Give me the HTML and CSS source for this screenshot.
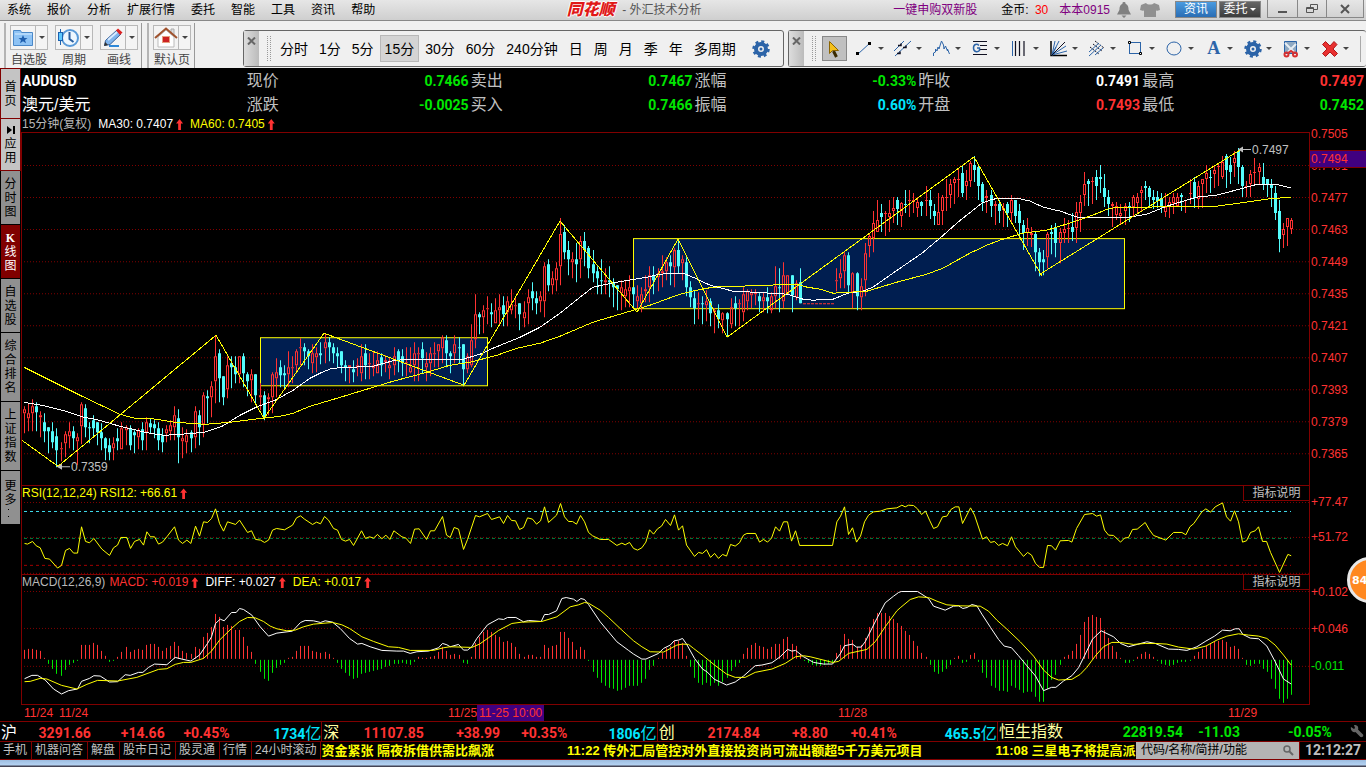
FILE: index.html
```html
<!DOCTYPE html>
<html lang="zh-CN">
<head>
<meta charset="utf-8">
<title>同花顺 - 外汇技术分析</title>
<link rel="stylesheet" href="styles.css">
</head>
<body>
<header class="menubar">
  <nav class="menu">
    <button>系统</button><button>报价</button><button>分析</button><button>扩展行情</button><button>委托</button><button>智能</button><button>工具</button><button>资讯</button><button>帮助</button>
  </nav>
  <h1 class="title"><span class="logo">同花顺</span> - 外汇技术分析</h1>
  <div class="account">
    <a class="promo" href="#">一键申购双新股</a>
    <span class="coins">金币: <b>30</b></span>
    <a href="#">本本0915</a>
    <svg class="bell" width="16" height="16" viewBox="0 0 16 16" fill="#808080"><path d="M8 0a1.500 1.500 0 0 1 1.500 1.800C12 2.600 12.500 5 12.600 8l2.400 4.500H1L3.400 8C3.500 5 4 2.600 6.500 1.800A1.500 1.500 0 0 1 8 0zM5.500 13.500h5L8 16z"/></svg>
    <svg class="shirt" width="20" height="16" viewBox="0 0 20 16" fill="#909090"><path d="M6 1c1.500 2 6.500 2 8 0l5 2 1 5-3.500 1L16 7.500V15H4V7.500L3.500 9 0 8l1-5z"/></svg>
    <button class="info">资讯</button><button class="trade">委托<i class="caret"></i></button>
    <div class="winctl">
      <button aria-label="最小化"><svg width="10" height="10" viewBox="0 0 10 10"><path d="M1 8h9" stroke="#555" stroke-width="2"/></svg></button>
      <button aria-label="还原"><svg width="12" height="10" viewBox="0 0 12 10" fill="none" stroke="#555"><path d="M4.500 3V.5h7v5H8M.5 3.500h7v5h-7zM.5 4.500h7"/></svg></button>
      <button aria-label="关闭"><svg width="10" height="10" viewBox="0 0 10 10"><path d="M1 1l8 8M9 1L1 9" stroke="#555" stroke-width="2"/></svg></button>
    </div>
  </div>
</header>

<div class="toolbar">
  <div class="shortcuts">
    <div class="group">
      <div class="tool"><button aria-label="自选股"><svg width="22" height="20" viewBox="0 0 22 20"><path d="M1.500 4V2.500h7l1 2h11v13h-19z" fill="#8ec3f5" stroke="#4a88c8"/><path d="M3 5.500h17v1H3z" fill="#d8ecff"/><path d="M11 7l1.300 3h3.200l-2.500 2 1 3.200-3-2-3 2 1-3.200-2.500-2h3.200z" fill="#1f5fae"/></svg></button><button aria-label="自选股菜单"><i class="caret"></i></button><span>自选股</span></div>
      <div class="tool"><button aria-label="周期"><svg width="22" height="20" viewBox="0 0 22 20"><circle cx="13" cy="10" r="8" fill="#eef7ff" stroke="#5a9ad8" stroke-width="2"/><path d="M12.500 4v7l4 3" fill="none" stroke="#2a5f9f" stroke-width="2"/><path d="M3.500 1v3m0 9v4" stroke="#1c62b0"/><rect x="1.500" y="4.500" width="4" height="8" fill="#5cc8ff" stroke="#1c62b0"/></svg></button><button aria-label="周期菜单"><i class="caret"></i></button><span>周期</span></div>
      <div class="tool"><button aria-label="画线"><svg width="22" height="20" viewBox="0 0 22 20"><path d="M7 18h10" stroke="#2f88d8" stroke-width="2"/><path d="M2.500 17.500l1-5L15 2l4 4L8 16.500z" fill="#7fb4ec" stroke="#365f98"/><path d="M14 2.500L16 .5l4.500 4L18 7z" fill="#d22"/><path d="M6 12l9-8" stroke="#d8eaff" stroke-width="2"/><path d="M2 18l1.200-4L6 17z" fill="#333"/></svg></button><button aria-label="画线菜单"><i class="caret"></i></button><span>画线</span></div>
    </div>
    <div class="group">
      <div class="tool"><button aria-label="默认页"><svg width="24" height="21" viewBox="0 0 24 21"><path d="M17 2h3v6h-3z" fill="#ddd" stroke="#aaa"/><path d="M4 10l8-7 8 7v10H4z" fill="#fff" stroke="#bbb"/><path d="M1 11L12 1.500 23 11" fill="none" stroke="#a0522d" stroke-width="2"/><rect x="8.500" y="9.500" width="7" height="6" fill="#c22" stroke="#e8a080"/></svg></button><button aria-label="默认页菜单"><i class="caret"></i></button><span>默认页</span></div>
    </div>
  </div>

  <div class="floatbar periods">
    <button class="close" aria-label="关闭工具条"><svg width="9" height="8" viewBox="0 0 9 8"><path d="M1 .5l7 7M8 .5l-7 7" stroke="#666" stroke-width="2"/></svg></button>
    <i class="grip"></i>
    <div class="periodlist">
      <button>分时</button><button>1分</button><button>5分</button><button class="on">15分</button><button>30分</button><button>60分</button><button>240分钟</button><button>日</button><button>周</button><button>月</button><button>季</button><button>年</button><button class="multi">多周期</button>
    </div>
    <button class="gear" aria-label="设置"><svg width="18" height="18" viewBox="0 0 18 18"><circle cx="9" cy="9" r="5" fill="none" stroke="#2c64a8" stroke-width="4"/><circle cx="9" cy="9" r="7.500" fill="none" stroke="#2c64a8" stroke-width="2.500" stroke-dasharray="3 2.890"/><circle cx="9" cy="9" r="1.500" fill="#2c64a8"/></svg></button>
  </div>

  <div class="floatbar drawing">
    <button class="close" aria-label="关闭画线工具"><svg width="9" height="8" viewBox="0 0 9 8"><path d="M1 .5l7 7M8 .5l-7 7" stroke="#666" stroke-width="2"/></svg></button>
    <i class="grip"></i>
    <button class="pointer" aria-label="选择"><svg width="12" height="18" viewBox="0 0 12 18"><path d="M5.500 11l3 6" stroke="#3a2a00" stroke-width="3"/><path d="M1.500 1.500v12l3-3h6z" fill="#f4c01c" stroke="#8b6400"/></svg></button>
    <div class="drawlist">
      <button aria-label="直线"><svg viewBox="0 0 18 18"><path d="M2 14L14 3" stroke="#2c64a8"/><path d="M0 12h3v3H0zM12 2h3v3h-3z" fill="#000"/></svg><i class="caret"></i></button>
      <button aria-label="平行线"><svg viewBox="0 0 18 18"><path d="M0 11L10 1M1 16L17 1" stroke="#2c64a8"/><path d="M4 5.500h3v-2M3 13.500h3v-2M9 7.500h3v-2" fill="none" stroke="#112" stroke-width="1.500"/></svg><i class="caret"></i></button>
      <button aria-label="波浪"><svg viewBox="0 0 18 18"><path d="M.5 16v-3l2-1V9l1.500 2 1-4 1 2 1.500-5 1-3 2 4 .5 4 1.500-3 2 5v-2l2 5" fill="none" stroke="#2c64a8"/></svg><i class="caret"></i></button>
      <button aria-label="黄金分割"><svg viewBox="0 0 18 18"><path d="M1 1.500h14M8 5.500h7M8 9.500h7M1 14.500h14" stroke="#112"/><path d="M7 5.500C5 3.500 1.500 4 1.500 8s4 4.500 6 2.500V8H5" fill="none" stroke="#2c64a8" stroke-width="1.500"/></svg><i class="caret"></i></button>
      <button aria-label="周期线"><svg viewBox="0 0 18 18"><path d="M4.500 1v15M8.500 1v15M13 1v15" stroke="#112" stroke-width="1.200"/><path d="M1.500 1v15" stroke="#2c64a8"/></svg><i class="caret"></i></button>
      <button aria-label="角度线"><svg viewBox="0 0 18 18"><path d="M1 1v14.500H17" fill="none" stroke="#000" stroke-width="1.500"/><path d="M2 15L5 1M2 15L9 1M2 15L16 6M2 15L17 11M2 15L6 7" stroke="#2c64a8"/><path d="M2 15L15 2" stroke="#112"/></svg><i class="caret"></i></button>
      <button aria-label="通道"><svg viewBox="0 0 18 18"><path d="M7 1l9 7M5 4l9 7M2 7l9 7" stroke="#112" stroke-dasharray="2 1"/><path d="M1 12L11 3M1 16L13 5M7 15l8-7" stroke="#2c64a8"/></svg><i class="caret"></i></button>
      <button aria-label="矩形"><svg viewBox="0 0 18 18"><rect x="2.500" y="2.500" width="11" height="11" fill="none" stroke="#2c64a8"/><path d="M1.500 1.500h2v2h-2zM12.500 12.500h2v2h-2z" fill="#fff" stroke="#000"/></svg><i class="caret"></i></button>
      <button aria-label="圆"><svg viewBox="0 0 18 18"><ellipse cx="8" cy="8.500" rx="7" ry="6.500" fill="none" stroke="#2c64a8"/></svg><i class="caret"></i></button>
      <button aria-label="文字"><b class="letter">A</b><i class="caret"></i></button>
      <button aria-label="画线设置"><svg viewBox="0 0 18 18"><circle cx="9" cy="9" r="5" fill="none" stroke="#2c64a8" stroke-width="4"/><circle cx="9" cy="9" r="7.500" fill="none" stroke="#2c64a8" stroke-width="2.500" stroke-dasharray="3 2.890"/><circle cx="9" cy="9" r="1.500" fill="#2c64a8"/></svg><i class="caret"></i></button>
      <button aria-label="截图"><svg viewBox="0 0 18 18"><path d="M2.500 1.500h12v12h-12z" fill="#8fa9c2" stroke="#2c64a8"/><path d="M3 3l9 9M14 4L6 12" stroke="#e8eef4" stroke-width="2"/><circle cx="4.500" cy="14.500" r="2" fill="none" stroke="#d83030" stroke-width="2"/><circle cx="13" cy="14.500" r="2" fill="none" stroke="#d83030" stroke-width="2"/><path d="M6 13l3-2 3 2" fill="none" stroke="#d83030" stroke-width="2"/></svg><i class="caret"></i></button>
      <button aria-label="删除"><svg viewBox="0 0 18 18"><path d="M1.500 4.500l3-3L9 6l4-4.500 3 3L12 9l4.500 4.500-3 3L9 12l-4.500 4.500-3-3L6 9z" fill="#e83030" stroke="#b01818"/></svg><i class="caret"></i></button>
    </div>
  </div>
</div>

<main class="workspace">
  <nav class="sidetabs">
    <button class="bright short">首页</button>
    <button class="bright app"><svg width="8" height="8" viewBox="0 0 8 8"><path d="M0 0l5 4-5 4zM6 0h2v8H6z"/></svg>应用</button>
    <button>分时图</button>
    <button class="active"><b>K</b>线图</button>
    <button>自选股</button>
    <button class="tall">综合排名</button>
    <button class="tall">上证指数</button>
    <button>更多<i class="dots"></i></button>
  </nav>

  <div class="content">
    <section class="quotes">
      <div class="name">AUDUSD</div>
      <div><span>现价</span><b class="down">0.7466</b></div>
      <div><span>卖出</span><b class="down">0.7467</b></div>
      <div><span>涨幅</span><b class="down">-0.33%</b></div>
      <div><span>昨收</span><b>0.7491</b></div>
      <div><span>最高</span><b class="up">0.7497</b></div>
      <div class="alias">澳元/美元</div>
      <div><span>涨跌</span><b class="down">-0.0025</b></div>
      <div><span>买入</span><b class="down">0.7466</b></div>
      <div><span>振幅</span><b class="cyan">0.60%</b></div>
      <div><span>开盘</span><b class="up">0.7493</b></div>
      <div><span>最低</span><b class="down">0.7452</b></div>
    </section>

    <section class="pane price">
      <div class="plot">
        <div class="legend"><span class="dim">15分钟(复权)</span><span class="white">MA30: 0.7407<i class="rise"></i></span><span class="yellow">MA60: 0.7405<i class="rise"></i></span></div>
        <div class="frame"><svg id="price" viewBox="22 133 1287 352" preserveAspectRatio="none"></svg></div>
      </div>
      <div class="axis"><span>0.7505</span><span>0.7491</span><span>0.7477</span><span>0.7463</span><span>0.7449</span><span>0.7435</span><span>0.7421</span><span>0.7407</span><span>0.7393</span><span>0.7379</span><span>0.7365</span><b class="cursor">0.7494</b></div>
    </section>

    <section class="pane rsi">
      <div class="plot frame">
        <div class="legend"><span class="yellow">RSI(12,12,24) RSI12: +66.61<i class="rise"></i></span><button class="explain">指标说明</button></div>
        <svg id="rsi" viewBox="22 501 1287 73" preserveAspectRatio="none"></svg>
      </div>
      <div class="axis"><span>+77.47</span><span>+51.72</span></div>
    </section>

    <section class="pane macd">
      <div class="plot frame">
        <div class="legend"><span class="dim">MACD(12,26,9)</span><span class="up">MACD: +0.019<i class="rise"></i></span><span class="white">DIFF: +0.027<i class="rise"></i></span><span class="yellow">DEA: +0.017<i class="rise"></i></span><button class="explain">指标说明</button></div>
        <svg id="macd" viewBox="22 590 1287 114" preserveAspectRatio="none"></svg>
      </div>
      <div class="axis"><span>+0.102</span><span>+0.046</span><span class="down">-0.011</span></div>
    </section>

    <div class="dates"><span>11/24</span><span>11/24</span><span>11/25</span><span><b>11-25 10:00</b></span><span>11/28</span><span>11/29</span></div>
  </div>
</main>

<section class="indices">
  <div class="sh"><span class="white">沪</span><b>3291.66</b><b>+14.66</b><b>+0.45%</b><b class="cyan">1734<i>亿</i></b></div>
  <div class="sz"><span>深</span><b>11107.85</b><b>+38.99</b><b>+0.35%</b><b class="cyan">1806<i>亿</i></b></div>
  <div class="cy"><span>创</span><b>2174.84</b><b>+8.80</b><b>+0.41%</b><b class="cyan">465.5<i>亿</i></b></div>
  <div class="hs"><span>恒生指数</span><b class="down">22819.54</b><b class="down">-11.03</b><b class="down">-0.05%</b>
    <svg width="14" height="14" viewBox="0 0 14 14"><path d="M1 2l3 2 1-1-1-3c3-.5 5 2 4 4.500l5 5c1 2-1 3-2.500 2.500l-5-5C3 8 0 5 1 2z" fill="#666"/></svg></div>
</section>

<footer class="ticker">
  <nav><a href="#">手机</a><a href="#">机器问答</a><a href="#">解盘</a><a href="#">股市日记</a><a href="#">股灵通</a><a href="#">行情</a><a href="#">24小时滚动</a></nav>
  <div class="news"><a href="#">资金紧张 隔夜拆借供需比飙涨</a><a href="#">11:22 传外汇局管控对外直接投资尚可流出额超5千万美元项目</a><a href="#">11:08 三星电子将提高派</a></div>
  <label class="search"><input type="text" placeholder="代码/名称/简拼/功能" aria-label="搜索"><svg width="11" height="11" viewBox="0 0 11 11" fill="none" stroke="#666"><circle cx="4" cy="4" r="3" stroke-width="1.500"/><path d="M6 6l4 4" stroke-width="2"/></svg></label>
  <time>12:12:27</time>
</footer>
<div class="desktop"></div>
<button class="bubble">84</button>
<script src="chart.js"></script>
</body>
</html>
```
FILE: styles.css
```css
* { box-sizing: border-box; }
body {
  margin: 0; min-height: 100vh; display: flex; flex-direction: column; position: relative; overflow: hidden;
  background: #000; color: #fff;
  font: 12px/16px "Liberation Sans", "Noto Sans CJK SC", sans-serif;
}
button { font: inherit; color: inherit; background: none; border: 0; padding: 0; margin: 0; white-space: nowrap; }
a { color: inherit; text-decoration: none; }
svg { display: block; flex: none; }
.caret { display: block; border: 4px solid transparent; border-top-color: #444; border-bottom: 0; flex: none; }
.white { color: #fff; }
.yellow { color: #ff0; }
.dim { color: #b8b8b8; }
.up { color: #ff3232; }
.down { color: #00e600; }
.cyan { color: #00e6ff; }

/* menu bar */
.menubar { display: flex; align-items: center; justify-content: space-between; height: 21px; background: linear-gradient(#e6e6e6, #cfcfcf); border-bottom: 1px solid #888; color: #000; padding-left: 7px; }
.menu { display: flex; gap: 16px; }
.title { margin: 0; font-size: 12px; font-weight: normal; color: #555; display: flex; gap: 4px; white-space: pre; }
.logo { font-size: 16px; font-weight: 900; font-style: italic; color: #e01818; text-shadow: 1px 0 #fff, -1px 0 #fff, 0 1px #fff, 0 -1px #fff; }
.account { display: flex; align-items: center; height: 20px; color: #800080; white-space: nowrap; }
.promo { margin-right: 24px; }
.coins { color: #000; margin-right: 11px; }
.coins b { font-weight: normal; color: #f00; margin-left: 3px; }
.bell { margin-left: 6px; }
.shirt { margin: 0 15px 0 8px; }
.info, .trade { height: 17px; width: 42px; color: #fff; border: 1px solid #888; display: flex; align-items: center; justify-content: center; gap: 3px; margin-bottom: 2px; }
.info { background: linear-gradient(#4a9be0, #2a6db4); margin-right: 2px; }
.trade { background: linear-gradient(#666, #3c3c3c); }
.trade .caret { border-width: 3px; border-bottom-width: 0; border-top-color: #fff; }
.winctl { display: flex; margin: 0 2px 0 6px; height: 18px; align-self: flex-start; border: 1px solid #888; border-top: 0; }
.winctl button { width: 29px; display: grid; place-items: center; }
.winctl button + button { border-left: 1px solid #888; }
.winctl button:last-child { width: 37px; }

/* toolbars */
.toolbar { display: flex; height: 47px; background: #f0f0f0; color: #000; }
.shortcuts { display: flex; padding: 2px 0 0 4px; width: 243px; flex: none; }
.group { display: flex; gap: 7px; padding: 2px 3px 0 4px; border-left: 2px solid #b4b4b4; border-right: 1px solid #999; margin-right: 5px; }
.tool { display: grid; grid-template-columns: 26px 12px; grid-template-rows: 25px 16px; color: #444; }
.tool button { border: 1px solid #b8b8b8; display: grid; place-items: center; background: #f4f4f4; }
.tool button + button { border-left: 0; }
.tool .caret { border-width: 3px; border-bottom-width: 0; }
.tool span { grid-column: 1 / 3; text-align: center; white-space: nowrap; line-height: 20px; }
.floatbar { display: flex; align-items: center; height: 37px; margin-top: 9px; border: 1px solid #666; border-radius: 3px; background: #f0f0f0; }
.close { width: 15px; align-self: stretch; display: flex; justify-content: center; padding-top: 6px; background: linear-gradient(90deg, #ddd, #bbb); }
.grip { width: 4px; height: 25px; margin-left: 8px; border-left: 1px dotted #999; border-right: 1px dotted #999; }
.periods { flex: 540 1 0; margin-right: 4px; min-width: 520px; }
.periodlist { display: flex; gap: 1px; margin-left: 4px; font-size: 14px; align-items: center; }
.periodlist button { height: 27px; padding: 0 5px; }
.periodlist .on { background: #d4d4d4; border: 1px solid #b8b8b8; padding: 0 4px; }
.gear { margin-left: 11px; }
.drawing { flex: 579 1 0; border-right: 0; }
.pointer { width: 25px; height: 25px; margin-left: 6px; background: #c0c0c0; border: 1px solid #888; display: grid; place-items: center; }
.drawlist { display: flex; flex: 1; padding-left: 9px; margin-right: 5px; border-right: 1px solid #aaa; height: 26px; }
.drawlist button { flex: 1; display: flex; align-items: center; gap: 4px; }
.drawlist svg { width: 18px; height: 18px; }
.drawlist .caret { border-width: 3px; border-bottom-width: 0; }
.letter { width: 18px; font: bold 18px "Liberation Serif", serif; color: #2c64a8; }

/* side tabs */
.workspace { display: flex; flex: 1; }
.sidetabs { width: 21px; display: flex; flex-direction: column; gap: 1px; flex: none; border-top: 1px solid #800000; }
.sidetabs button { width: 19px; height: 53px; margin-left: 1px; background: #909090; color: #000; white-space: normal; word-break: break-all; padding: 0 3px; line-height: 14px; }
.sidetabs .short { height: 49px; }
.sidetabs .tall { height: 68px; }
.sidetabs .bright { background: #c4c4c4; outline: 1px solid #800000; }
.sidetabs .app { height: 51px; }
.sidetabs .app svg { margin: 2px 0 3px 3px; }
.sidetabs .active { background: #800000; color: #fff; }
.sidetabs b { display: block; font-family: "Liberation Serif", serif; }
.dots { display: block; width: 1px; height: 8px; margin: 2px 0 0 4px; border-top: 1px solid #000; border-bottom: 1px solid #000; }

/* quote table */
.content { flex: 1; display: flex; flex-direction: column; min-width: 0; }
.quotes { display: grid; grid-template-columns: 225fr repeat(5, 224fr); padding-left: 1px; line-height: 24px; font-size: 16px; padding-top: 1px; }
.quotes div { display: flex; justify-content: space-between; padding-right: 2px; }
.quotes span { color: #c0c0c0; }
.quotes b, .quotes .name { font: bold 14px/24px Roboto, sans-serif; }

/* chart panes */
.pane { display: flex; line-height: 15px; }
.plot { flex: 1; display: flex; flex-direction: column; min-width: 0; }
.plot svg { width: 100%; flex: 1 1 0; height: 0; min-height: 0; }
.frame { border: 1px solid #800000; border-bottom: 0; }
.price .frame { flex: 1; display: flex; }
.price .frame svg { height: auto; }
.price { flex: 369 1 0; }
.rsi { flex: 89 1 0; }
.macd { flex: 130 1 0; }
.price .legend { height: 15px; padding-left: 1px; }
.legend { display: flex; height: 15px; flex: none; gap: 7px; white-space: nowrap; }
.legend span { display: flex; align-items: center; gap: 3px; line-height: 17px; }
.legend .dim + .up { margin-left: -3px; }
.rise { width: 7px; height: 11px; background: #ff3232; clip-path: polygon(50% 0, 100% 40%, 70% 40%, 70% 100%, 30% 100%, 30% 40%, 0 40%); }
.explain { margin-left: auto; width: 66px; color: #c0c0c0; border: 1px solid #800000; border-top: 0; border-right: 0; }
.axis { width: 56px; padding-left: 1px; position: relative; color: #ff3232; }
.axis span { display: block; line-height: 32px; }
.price .axis { padding-top: 1px; }
.rsi .axis span { line-height: 35px; }
.macd .axis span { line-height: 37px; }
.axis .cursor { position: absolute; left: -1px; right: 0; top: 33px; height: 18px; line-height: 16px; padding-left: 1px; font-weight: normal; background: #400080; border: 1px solid #800000; border-right: 0; }
.dates { display: grid; grid-template-columns: 35fr 389fr 29fr 361fr 390fr 82fr; padding-left: 3px; border-top: 1px solid #800000; margin-right: 56px; line-height: 16px; color: #ff3232; white-space: nowrap; }
.dates b { font-weight: normal; background: #400080; display: inline-block; padding: 0 2px; }
.grid { stroke: #800000; stroke-dasharray: 1 2; }
.line { fill: none; shape-rendering: crispEdges; }
.box { fill: #001e50; stroke: #ff0; }
.note { fill: #c0c0c0; font-size: 12px; }

/* index strip */
.indices { display: flex; border-top: 1px solid #800000; height: 20px; line-height: 20px; font-size: 16px; color: #ff3232; }
.indices div { display: grid; padding-left: 1px; white-space: nowrap; align-items: center; }
.indices div + div { border-left: 1px solid #800000; }
.indices span { color: #ffffa0; }
.indices .white { color: #fff; }
.indices b { font: bold 14px/20px Roboto, sans-serif; text-align: right; }
.indices i { font: 16px/20px "Noto Sans CJK SC", sans-serif; }
.sh { flex: 322 1 0; grid-template-columns: 16fr 74fr 74fr 65fr 92fr; }
.sz { flex: 335 1 0; grid-template-columns: 16fr 84fr 76fr 67fr 89fr; }
.cy { flex: 340 1 0; grid-template-columns: 16fr 85fr 68fr 69fr 100fr; }
.hs { flex: 369 1 0; grid-template-columns: 64fr 120fr 57fr 92fr 34fr; }
.hs svg { margin-left: 18px; }

/* news ticker */
.ticker { display: flex; height: 19px; border-top: 1px solid #800000; border-bottom: 1px solid #800000; line-height: 17px; color: #c0c0c0; }
.ticker nav { display: flex; }
.ticker nav a { padding: 0 4px 0 3px; border-right: 1px solid #800000; white-space: nowrap; }
.news { flex: 1 1 0; min-width: 0; overflow: hidden; display: flex; gap: 73px; font-size: 13px; font-weight: bold; color: #ff0; white-space: nowrap; }
.search { display: flex; align-items: center; width: 163px; background: #b4b4b4; padding: 0 5px; }
.search input { flex: 1; min-width: 0; border: 0; padding: 0; background: none; font: inherit; color: #000; }
.search input::placeholder { color: #000; opacity: 1; }
.ticker time { font: bold 14px/17px Roboto, sans-serif; padding: 0 5px; border-left: 1px solid #800000; }
.desktop { height: 7px; background: linear-gradient(#9dbde0, #b4d2f2 5px, #445 6px); }
.bubble { position: absolute; right: -27px; top: 557px; width: 46px; height: 46px; border-radius: 50%; background: #ff8820; border: 3px solid #e8e8e8; color: #fff; font: bold 11px "DejaVu Sans", sans-serif; text-align: left; padding-left: 2px; }
```
FILE: chart.js
```js
const NS = 'http://www.w3.org/2000/svg';
const RED = '#ff3232', CYAN = '#54fcfc', GREEN = '#00e600';

function add(parent, tag, attrs, text) {
  const el = document.createElementNS(NS, tag);
  for (const key in attrs) el.setAttribute(key, attrs[key]);
  if (text) el.textContent = text;
  parent.appendChild(el);
  return el;
}
const hline = (svg, y, attrs, x2 = 1309) => add(svg, 'path', { d: `M24 ${y + 0.5}H${x2}`, ...attrs });
const barX = i => 24 + Math.round(i * 4.061);
const toPoints = text => text.trim().split(/\s+/).map(p => p.split(',').map(Number));
const polyline = (svg, points, stroke) => add(svg, 'polyline', { class: 'line', points: points.map(p => p.join(',')).join(' '), stroke });

// Sub-pane series come in three blocks; x and y are in thirds of a pixel from the block origin.
const origins = [0, 450, 900];
const join = blocks => blocks.flatMap((b, k) => toPoints(b).map(([x, y]) => [origins[k] + x / 3, y]));
const series = blocks => join(blocks).map(([x, y]) => [x + 0.2, 480.2 + y / 3]);

// colour, high, body top, body bottom, low
const candles = `r406,409,413,433 r403,413,418,431 r399,406,413,431 c402,406,412,431 r411,415,417,437 c413,422,431,442 c427,427,431,453 c422,431,442,448 c428,436,450,467 r442,448,449,461
r431,434,443,457 r422,431,436,448 c426,431,438,450 r433,437,441,465 r402,404,426,444 c404,408,427,437 c422,427,428,443 c415,420,428,437 c422,422,432,445 c423,432,438,450
c437,438,448,460 c438,445,452,460 r437,443,448,460 c428,438,441,450 r422,428,449,449 r425,427,430,445 c425,428,445,450 c430,432,435,453 r428,430,437,449 c422,429,440,450
r417,422,432,450 c418,423,427,433 c420,424,428,438 c422,428,440,450 c428,435,442,452 r425,429,433,442 r420,425,431,440 r406,415,427,440 c409,418,437,463 r427,438,441,458
r429,435,442,453 c430,432,438,452 r406,411,437,448 c410,415,427,445 r392,395,424,437 c390,396,398,423 r381,386,397,417 r335,356,381,403 c349,353,378,402 c376,376,397,405
r356,365,389,398 c356,363,367,388 c356,367,374,383 r356,356,374,383 c353,356,373,387 c372,374,381,396 r369,374,380,402 c374,374,395,404 r383,395,397,410 c391,395,417,420
r393,397,399,415 r372,374,397,413 r358,372,378,397 c360,367,375,387 c365,373,375,388 r351,367,374,387 r356,367,368,383 r349,351,365,373 r338,347,348,365 c343,347,351,365
c349,351,356,369 r344,353,363,373 r347,353,357,372 c342,353,355,364 r333,342,348,363 c337,342,347,361 c343,347,353,363 c347,353,356,367 c351,351,365,373 c360,365,367,381
r365,365,367,383 c360,369,372,382 r358,365,367,376 r344,356,373,381 c344,353,365,379 r353,363,364,379 r351,365,368,376 r351,360,373,373 c353,357,365,376 r355,360,362,372
r357,365,368,379 r347,356,365,375 c349,351,361,372 c349,356,363,376 r347,362,363,376 r347,367,372,373 r342,353,365,381 r347,353,354,381 c342,349,358,373 r352,363,367,381
r347,353,363,376 r342,353,354,367 r344,344,351,367 r335,337,348,363 c335,340,353,367 c351,353,356,373 r335,344,353,363 c337,347,348,363 c344,344,369,386 r353,356,369,373
r324,340,365,367 r294,314,339,348 c312,314,317,334 r305,310,317,333 r296,308,309,324 c303,312,314,327 r298,310,323,323 r294,307,310,324 c296,305,314,326 r296,301,312,326
r289,304,310,314 r296,305,306,318 c303,303,314,330 r301,312,318,327 r289,297,303,324 c282,291,298,310 c291,298,303,314 r291,296,301,312 r262,266,301,317 c259,264,285,291
r271,278,285,294 r262,268,280,291 r218,234,266,285 c225,232,252,259 c241,250,259,275 r252,259,262,278 c243,259,264,282 r236,241,259,278 c232,241,250,266 c246,248,268,278
c250,264,273,282 c266,271,278,294 c259,280,281,294 r268,280,282,294 c266,280,282,297 c278,282,287,307 c285,285,289,310 r280,287,293,310 r280,289,296,307 r275,287,291,307
c287,287,294,308 r285,296,301,308 r287,294,303,312 r275,289,291,302 r266,275,287,302 c266,275,280,294 r268,273,277,291 r255,271,273,287 r257,262,271,280 c255,262,266,285
r248,250,267,287 c239,250,266,273 r255,259,263,280 c257,262,287,296 c281,287,297,307 c290,298,308,324 r292,303,304,319 c296,303,304,324 r290,301,305,321 c298,301,313,326
r308,310,312,333 c304,310,319,328 r312,313,320,333 c312,313,319,337 r298,307,324,328 c296,303,308,326 r299,303,304,326 r287,294,312,321 r289,291,301,310 r289,292,295,308
r289,292,294,305 c292,296,301,312 r292,297,301,312 c287,297,301,313 r292,296,310,313 r266,286,296,308 c268,287,288,312 r262,275,301,308 r275,275,294,294 c275,275,295,312
r280,283,297,300 c268,282,303,303 r303,303,304,303 r303,303,304,303 r303,303,304,303 r303,303,304,303 r303,303,304,303 r303,303,304,303 r303,303,304,303 r303,303,304,303
r268,280,281,291 r259,273,278,288 r252,255,271,288 c252,255,285,293 r272,273,292,308 c272,273,296,310 r278,286,297,310 r243,253,280,296 r233,236,246,257 r211,223,238,252
r200,220,232,232 c204,213,217,232 r211,213,214,236 r200,213,217,232 r197,208,211,223 c197,200,209,225 r202,203,216,227 c190,204,205,213 r190,200,201,217 r193,200,202,213
r197,202,208,217 c201,202,206,216 r186,200,201,216 c190,200,206,219 c204,211,216,225 r193,212,225,225 r195,197,211,225 r179,197,198,211 r179,184,195,208 r177,179,183,204
r169,179,180,197 c166,173,193,197 r170,181,186,200 r161,163,181,187 c156,165,170,182 c165,167,186,200 c182,184,202,211 r190,196,198,213 c190,195,206,217 r201,204,206,225
c200,204,211,223 r203,208,210,227 c202,204,213,227 r195,200,213,223 c200,200,216,223 c204,211,223,237 c220,225,233,250 r218,228,233,246 r227,233,235,247 c232,234,252,271
c248,252,262,276 c250,259,262,275 r232,234,257,268 c225,232,234,254 c223,227,243,257 r228,232,243,263 r218,229,233,243 r220,228,229,243 c213,227,232,241 r202,212,228,243
r195,202,213,232 r172,184,195,206 c179,181,184,206 r177,181,182,204 c170,177,186,200 c165,177,179,193 c174,188,197,207 c190,197,204,216 r202,204,206,227 r202,206,215,220
r204,213,216,225 r203,206,211,225 c202,206,207,222 r195,197,207,217 r193,197,203,213 r186,190,193,211 c181,186,188,200 c186,188,197,206 c190,197,200,209 c191,197,201,208
c193,198,206,213 r193,207,212,217 r197,202,207,218 r193,197,203,214 r193,197,206,207 c193,195,197,211 r200,200,201,213 r179,193,194,204 c177,182,198,208 r181,186,199,209
r179,179,184,208 r165,173,179,193 c170,177,178,193 r165,170,174,188 r163,166,167,186 r156,162,177,179 c154,156,170,188 c157,165,172,184 r151,158,163,177 c148,151,167,184
c165,167,186,197 r181,186,187,197 r170,174,184,197 r158,172,173,185 r163,167,172,184 c163,177,184,190 c179,179,184,197 c179,184,188,207 c186,193,213,220 c200,211,239,252
r223,229,235,248 r218,218,227,246 r218,220,229,234`.trim().split(/\s+/);

const ma30 = toPoints(`24,402 42,405 66,411 84,417 96,419 120,426 150,433 164,435 180,434 204,432 222,426 240,415 258,406 275,400 293,390 310,378 320,373 332,368 373,366 395,360 417,359 463,359 480,354 493,348 520,337 540,327 560,313 580,297 593,287 617,282 647,277 660,274 683,273 695,278 710,285 733,291 753,292 787,294 803,299 813,300 833,299 848,293 863,291 873,287 893,273 922,253 940,238 958,222 982,203 993,199 1017,198 1030,201 1043,207 1060,211 1077,217 1130,217 1147,214 1167,206 1197,197 1217,195 1240,189 1258,184 1275,184 1291,188`);
const ma60 = toPoints(`24,367 80,395 120,414 135,418 150,418 175,422 205,424 230,422 262,418 280,416 293,413 310,406 330,400 337,398 360,391 393,381 427,372 450,365 470,362 497,355 517,348 540,343 560,336 593,322 620,314 650,305 680,294 697,290 713,287 797,284 807,287 820,289 833,293 867,291 897,282 927,274 943,268 970,253 987,245 1000,240 1023,233 1047,230 1073,222 1093,215 1110,208 1147,207 1217,206 1240,203 1267,199 1291,197`);
const zigzag = toPoints('22,440 58,466 216,335 264,418 324,333 464,385 560,221 637,312 678,239 727,337 974,157 1042,276');

const rsi = series([
`73,190 82,192 97,184 108,197 120,203 134,235 148,237 172,264 184,256 196,211 208,205 220,219 232,219 244,140 256,184 268,188 281,175 305,207 328,226 340,203 352,195 362,172 380,172 391,205 403,184 418,178 430,195 440,155 451,170 463,170 475,192 487,186 500,170 523,140 535,180 547,190 560,180 572,190 586,138 598,168 610,125 622,127 634,115 646,86 658,130 670,153 682,125 706,133 718,120 742,157 754,152 766,178 781,180 793,187 805,180 817,150 829,145 853,149 877,135 889,113 901,107 913,117 937,133 949,126 961,131 973,109 985,120 1000,145 1012,150 1024,178 1036,183 1048,178 1060,196 1084,152 1096,175 1108,170 1120,174 1132,163 1145,176 1157,165 1169,178 1181,152 1205,170 1217,174 1231,190 1243,147 1257,146 1279,178 1291,152 1303,152 1327,109 1339,165`,
`0,172 12,142 25,147 40,208 52,178 76,106 88,110 112,100 124,118 148,110 160,130 172,106 184,121 196,122 208,148 220,142 232,113 247,117 259,132 271,122 283,80 295,127 319,105 331,70 343,110 355,124 367,124 379,132 391,106 403,125 415,157 427,167 450,178 475,178 500,196 515,189 525,194 538,187 550,205 562,210 575,203 587,186 598,149 610,162 622,146 634,138 646,118 661,136 673,104 685,150 697,137 709,195 733,229 745,217 757,220 769,209 781,232 793,220 805,235 817,223 829,228 841,193 855,198 868,188 880,165 890,160 916,160 928,186 940,178 952,186 964,174 976,140 988,153 1000,125 1012,125 1024,183 1036,152 1048,196 1147,196 1160,125 1171,108 1183,80 1195,163 1207,143 1219,186 1231,168 1243,125 1255,105 1270,95 1290,93 1310,86 1340,83`,
`5,75 15,80 25,75 40,76 52,86 64,103 76,93 88,120 100,145 112,140 127,110 140,108 152,88 165,80 176,80 187,130 211,83 223,105 247,177 259,170 271,187 283,184 295,196 307,190 322,197 334,170 346,200 370,229 382,217 394,225 406,250 418,262 430,262 442,196 454,197 466,210 480,182 505,181 515,186 529,145 553,103 577,100 589,108 601,104 613,150 625,165 640,166 661,186 673,174 685,172 697,148 711,147 735,127 747,148 760,166 797,180 820,157 845,157 857,164 869,140 881,130 905,95 917,86 931,96 945,80 967,68 979,110 991,123 1003,92 1015,125 1027,186 1039,182 1051,157 1065,152 1075,140 1087,184 1099,184 1111,217 1138,277 1163,223 1173,227`]);
const diff = series([
`73,596 95,586 112,586 135,600 160,627 184,642 205,632 232,627 244,604 268,595 281,587 300,588 328,606 352,605 375,584 390,586 415,577 428,577 445,562 463,552 500,554 525,532 545,537 572,543 598,525 622,490 634,470 646,430 660,417 672,422 694,397 708,397 718,385 730,388 755,405 780,440 805,468 830,459 877,453 901,427 915,421 940,422 961,427 975,422 997,426 1020,445 1048,475 1072,492 1085,490 1110,500 1145,511 1190,513 1210,513 1230,520 1250,515 1285,513 1315,503 1327,490 1340,494`,
`0,500 25,493 40,510 52,510 65,500 80,475 112,434 145,416 160,418 172,412 197,412 220,425 235,421 273,424 283,403 295,403 319,392 335,355 348,352 370,357 380,364 392,355 403,358 415,373 450,425 500,485 535,511 550,522 575,537 587,537 625,520 640,505 660,495 672,482 685,480 697,475 709,492 733,535 757,567 770,575 793,598 829,615 855,606 880,588 915,557 935,555 965,548 990,530 1012,508 1025,513 1036,511 1060,530 1090,547 1120,552 1147,552 1171,520 1183,497 1207,492 1219,501 1233,501 1245,485 1280,415 1305,368 1330,348 1345,337`,
`3,334 52,334 85,355 100,378 135,390 160,378 175,377 188,385 201,382 215,373 230,377 245,402 271,442 295,478 312,498 334,503 355,527 380,557 406,588 430,632 454,622 467,622 490,603 515,587 535,563 553,527 577,477 603,452 640,470 661,490 685,500 711,493 740,485 765,490 805,507 835,508 860,511 890,500 917,483 943,468 967,450 990,452 1005,446 1017,446 1028,463 1050,474 1075,476 1100,498 1125,545 1150,597 1173,612`]);
const dea = series([
`73,605 90,604 120,595 140,597 184,616 230,627 260,613 292,601 352,603 410,592 475,568 500,566 525,553 550,547 572,547 610,535 634,513 658,480 694,445 718,424 742,412 765,413 790,424 810,438 830,446 860,452 885,450 910,440 940,432 997,427 1025,434 1048,445 1085,470 1120,484 1165,500 1195,502 1230,511 1300,511 1330,503`,
`0,500 65,502 88,492 115,473 145,451 185,430 215,426 275,424 320,410 360,380 385,374 403,367 415,369 450,390 475,412 515,450 550,482 575,500 600,515 640,516 680,495 697,492 715,493 730,505 760,528 793,555 829,582 855,592 885,592 915,577 965,567 1005,550 1036,530 1060,527 1080,530 1147,547 1165,544 1195,520 1250,508 1275,485 1305,440 1340,392`,
`0,383 30,358 55,350 85,352 110,363 140,374 180,377 240,378 265,393 290,420 320,447 360,485 400,528 430,570 454,592 475,600 515,598 540,583 560,562 585,528 610,500 635,487 660,487 700,493 735,490 765,490 800,492 835,501 880,507 917,498 950,480 980,468 1015,461 1045,465 1075,468 1100,475 1125,495 1150,525 1173,555`]);
const histogram = join([
`73,28 100,30 109,28 122,22 134,2 146,-12 157,-27 172,-45 184,-47 196,-30 208,-15 220,-8 232,-2 244,42 268,43 281,49 293,40 305,24 317,7 328,-6 340,-3 352,6 364,22 379,35 391,22 415,30 427,28 439,43 463,46 487,25 511,40 523,52 535,40 547,25 560,18 572,10 586,37 598,30 610,65 622,78 634,97 646,136 658,127 670,95 682,102 694,100 706,86 718,88 730,67 742,40 754,22 766,-11 781,-36 793,-56 805,-62 817,-40 829,-25 841,-15 853,-8 865,3 877,7 889,25 901,40 925,38 937,25 961,17 973,22 985,17 1000,3 1012,-10 1024,-27 1036,-40 1048,-48 1060,-57 1072,-53 1084,-42 1108,-37 1132,-30 1157,-22 1181,-12 1205,-10 1231,-15 1243,-5 1255,5 1279,2 1291,7 1303,10 1315,20 1327,37 1339,25`,
`1,13 25,18 34,-2 40,-8 52,-12 64,6 76,47 88,65 100,80 112,88 124,80 136,73 148,67 160,52 172,55 184,47 196,37 208,16 220,3 232,12 247,13 259,5 271,7 283,42 295,33 319,43 331,82 343,80 355,63 367,50 379,28 391,37 403,28 415,-3 427,-30 439,-50 454,-68 466,-77 478,-83 502,-92 526,-85 538,-77 562,-77 574,-68 586,-57 598,-30 610,-18 622,-2 634,13 646,30 661,40 673,55 685,55 697,48 709,10 721,-22 733,-55 745,-68 757,-75 769,-70 781,-77 793,-70 805,-77 817,-67 829,-60 841,-37 856,-22 868,-8 880,16 892,33 904,42 916,48 928,40 940,37 952,30 964,35 976,45 988,45 1000,60 1012,67 1024,45 1036,45 1048,20 1060,-3 1072,-8 1096,-17 1110,-18 1135,-12 1147,-8 1160,20 1171,43 1183,75 1195,60 1207,57 1219,37 1231,37 1243,55 1255,90 1270,120 1282,137 1306,138 1318,130 1330,120 1342,107`,
`5,97 17,82 29,70 40,55 52,40 64,18 76,10 88,-8 100,-33 115,-41 139,-28 151,-15 163,3 175,8 187,-8 199,-5 211,12 223,17 235,-5 247,-40 259,-55 271,-75 283,-83 295,-92 307,-92 322,-95 334,-78 346,-83 370,-98 394,-95 406,-110 418,-125 430,-125 442,-88 454,-60 466,-45 478,-20 490,3 502,10 515,22 529,45 541,73 553,110 565,127 577,133 589,127 601,123 613,88 625,63 637,40 649,22 661,3 673,-8 685,-12 697,-3 709,3 721,12 735,20 747,17 760,7 772,-2 785,-12 808,-18 835,-8 868,-3 880,8 892,18 905,27 917,38 931,45 955,55 967,58 979,50 991,37 1003,40 1015,30 1027,3 1039,-15 1051,-18 1075,-8 1087,-25 1099,-30 1111,-50 1123,-78 1138,-118 1150,-130 1163,-117 1175,-105`]);

function valueAt(points, x) {
  for (let k = 1; k < points.length; k++) {
    const [x1, y1] = points[k - 1], [x2, y2] = points[k];
    if (x <= x2) return x2 === x1 ? y2 : y1 + (y2 - y1) * Math.max(0, x - x1) / (x2 - x1);
  }
  return points[points.length - 1][1];
}

// price pane
const price = document.getElementById('price');
for (let y = 165; y < 485; y += 32) hline(price, y, { class: 'grid' });
add(price, 'rect', { class: 'box', x: 260.5, y: 337.5, width: 227, height: 48 });
add(price, 'rect', { class: 'box', x: 633.5, y: 238.5, width: 491, height: 70 });
let redWicks = '', cyanWicks = '', hollow = '', solid = '', flat = '';
candles.forEach((text, i) => {
  const [high, top, bottom, low] = text.slice(1).split(',').map(Number);
  const x = barX(i);
  if (text[0] === 'r') {
    redWicks += `M${x + 0.5} ${high}V${top}M${x + 0.5} ${bottom}V${Math.max(low, bottom)}`;
    if (bottom - top > 2) hollow += `M${x - 0.5} ${top + 0.5}h2V${bottom - 0.5}h-2z`;
    else flat += `M${x - 1} ${top}h3V${bottom}h-3z`;
  } else {
    cyanWicks += `M${x + 0.5} ${high}V${low}`;
    solid += `M${x - 1} ${top}h3V${bottom}h-3z`;
  }
});
add(price, 'path', { d: redWicks, stroke: RED });
add(price, 'path', { d: hollow, stroke: RED, fill: 'none' });
add(price, 'path', { d: flat, fill: RED });
add(price, 'path', { d: cyanWicks, stroke: CYAN });
add(price, 'path', { d: solid, fill: CYAN });
polyline(price, ma30, '#fff');
polyline(price, ma60, '#ff0');
polyline(price, zigzag, '#ff0');
polyline(price, [[1040, 274], [1240, 150]], '#ff0');
add(price, 'path', { d: 'M58 466.5H70M1240 149.5H1251', stroke: '#c0c0c0' });
add(price, 'path', { d: 'M57 466.5l5-3v6zM1238 149.5l5-3v6z', fill: '#c0c0c0' });
add(price, 'text', { class: 'note', x: 71, y: 471 }, '0.7359');
add(price, 'text', { class: 'note', x: 1252, y: 154 }, '0.7497');

// RSI pane
const rsiPane = document.getElementById('rsi');
[502, 537, 573].forEach(y => hline(rsiPane, y, { class: 'grid' }));
hline(rsiPane, 511, { stroke: '#40e0f0', 'stroke-dasharray': '3 3' }, 1291);
hline(rsiPane, 538, { stroke: '#008040', 'stroke-dasharray': '3 3' }, 1291);
hline(rsiPane, 565, { stroke: '#a00000', 'stroke-dasharray': '3 3' }, 1291);
polyline(rsiPane, rsi, '#ff0');

// MACD pane
const macd = document.getElementById('macd');
[591, 628, 666].forEach(y => hline(macd, y, { class: 'grid' }));
let rising = '', falling = '';
candles.forEach((_, i) => {
  const x = barX(i), value = Math.round(valueAt(histogram, x + 0.3) / 3);
  if (value > 0) rising += `M${x + 0.5} 659v${-value}`;
  else falling += `M${x + 0.5} 660v${Math.max(1, -value)}`;
});
add(macd, 'path', { d: rising, stroke: RED });
add(macd, 'path', { d: falling, stroke: GREEN });
polyline(macd, diff, '#fff');
polyline(macd, dea, '#ff0');
```
